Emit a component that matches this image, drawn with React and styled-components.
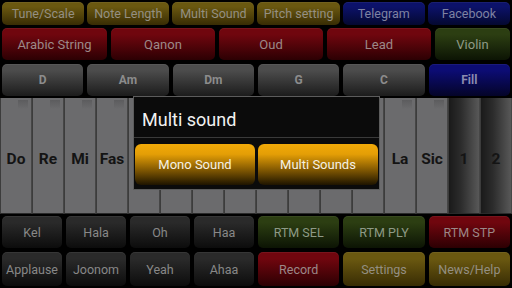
import React from "react";
import styled, { createGlobalStyle } from "styled-components";

const Global = createGlobalStyle`
  html, body { margin: 0; padding: 0; background: #000; }
  body { font-family: Roboto, "Noto Sans", Arial, sans-serif; }
`;

const Screen = styled.div`
  position: relative;
  width: 512px;
  height: 288px;
  background: #000;
  overflow: hidden;
  display: flex;
  flex-direction: column;
`;

const palette = {
  gold: ["#6a5810", "#382c04", "#948f82"],
  blue: ["#0c126a", "#040830", "#7e82a2"],
  red: ["#70060e", "#2c0003", "#9c8888"],
  green: ["#2c3e12", "#0c1404", "#8e9a86"],
  gray: ["#4c4c4c", "#1c1c1c", "#8c8c8c"],
  black: ["#2a2a2a", "#0c0c0c", "#888888"],
  fill: ["#0c0c74", "#040428", "#8a8ab0"],
};

const Row = styled.div`
  display: grid;
  grid-template-columns: ${(p) => p.$cols};
  gap: ${(p) => p.$gap || 4}px;
  height: ${(p) => p.$h}px;
  margin-top: ${(p) => p.$mt}px;
  padding: 0 2px;
`;

const Btn = styled.div`
  border-radius: 5px;
  background: linear-gradient(
    to bottom,
    ${(p) => palette[p.$c][0]} 0%,
    ${(p) => palette[p.$c][0]} 20%,
    ${(p) => palette[p.$c][1]} 100%
  );
  color: ${(p) => palette[p.$c][2]};
  display: flex;
  align-items: center;
  justify-content: center;
  font-size: ${(p) => p.$fs || 12.5}px;
  font-weight: ${(p) => (p.$bold ? 700 : 400)};
  white-space: nowrap;
  box-shadow: inset 0 1px 0 rgba(255, 255, 255, 0.06);
`;

const Keyboard = styled.div`
  margin-top: 2px;
  height: 116px;
  display: grid;
  grid-template-columns: repeat(16, 1fr);
`;

const Key = styled.div`
  position: relative;
  background: ${(p) =>
    p.$dark
      ? "linear-gradient(to right, #1a1a1a 0%, #2c2c2c 40%, #585858 100%)"
      : "#6b6b6d"};
  border-left: 1px solid #3c3c3c;
  border-right: 1px solid #464646;
  border-bottom: 1px solid #2a2a2a;
  box-sizing: border-box;
  display: flex;
  align-items: center;
  justify-content: center;
  padding-top: 7px;
  color: #141414;
  font-size: 15.5px;
  font-weight: 700;
  &::after {
    content: "";
    display: ${(p) => (p.$dark ? "none" : "block")};
    position: absolute;
    top: 2px;
    right: 3px;
    width: 10px;
    height: 9px;
    background: linear-gradient(to bottom, #5c5c5e, #6b6b6d);
  }
`;

const Dialog = styled.div`
  position: absolute;
  left: 133px;
  top: 96px;
  width: 247px;
  height: 94px;
  box-sizing: border-box;
  background: #0b0b0b;
  border: 1px solid #5c5c5c;
  display: flex;
  flex-direction: column;
`;

const Title = styled.div`
  height: 41px;
  box-sizing: border-box;
  border-bottom: 1px solid #3a3a3a;
  display: flex;
  align-items: center;
  padding-left: 8px;
  padding-top: 5px;
  color: #f2f2f2;
  font-size: 18px;
`;

const Choices = styled.div`
  display: grid;
  grid-template-columns: 1fr 1fr;
  gap: 3px;
  padding: 6px 1px 0 1px;
`;

const Choice = styled.div`
  height: 41px;
  border-radius: 6px;
  background: linear-gradient(
    to bottom,
    #f2aa08 0%,
    #e49e06 25%,
    #8a5e02 60%,
    #1e1400 100%
  );
  color: #f6f1e4;
  font-size: 13px;
  display: flex;
  align-items: center;
  justify-content: center;
`;

const row1 = [
  ["Tune/Scale", "gold"],
  ["Note Length", "gold"],
  ["Multi Sound", "gold"],
  ["Pitch setting", "gold"],
  ["Telegram", "blue"],
  ["Facebook", "blue"],
];
const row2 = [
  ["Arabic String", "red"],
  ["Qanon", "red"],
  ["Oud", "red"],
  ["Lead", "red"],
  ["Violin", "green"],
];
const row3 = [
  ["D", "gray"],
  ["Am", "gray"],
  ["Dm", "gray"],
  ["G", "gray"],
  ["C", "gray"],
  ["Fill", "fill"],
];
const row4 = [
  ["Kel", "black"],
  ["Hala", "black"],
  ["Oh", "black"],
  ["Haa", "black"],
  ["RTM SEL", "green"],
  ["RTM PLY", "green"],
  ["RTM STP", "red"],
];
const row5 = [
  ["Applause", "black"],
  ["Joonom", "black"],
  ["Yeah", "black"],
  ["Ahaa", "black"],
  ["Record", "red"],
  ["Settings", "gold"],
  ["News/Help", "gold"],
];
const keys = [
  "Do", "Re", "Mi", "Fas", "", "", "", "", "", "", "", "", "La", "Sic", "1", "2",
];

export default function App() {
  return (
    <Screen>
      <Global />
      <Row $cols="repeat(6, 1fr)" $gap={3} $h={23} $mt={2}>
        {row1.map(([t, c]) => (
          <Btn key={t} $c={c} $fs={12.5}>{t}</Btn>
        ))}
      </Row>
      <Row $cols="105px 104px 104px 104px 1fr" $h={32} $mt={3}>
        {row2.map(([t, c]) => (
          <Btn key={t} $c={c} $fs={13}>{t}</Btn>
        ))}
      </Row>
      <Row $cols="repeat(6, 1fr)" $h={32} $mt={4}>
        {row3.map(([t, c]) => (
          <Btn key={t} $c={c} $bold $fs={12}>{t}</Btn>
        ))}
      </Row>
      <Keyboard>
        {keys.map((k, i) => (
          <Key key={i} $dark={i >= 14}>{k}</Key>
        ))}
      </Keyboard>
      <Row $cols="repeat(4, 60px) repeat(3, 1fr)" $h={32} $mt={2}>
        {row4.map(([t, c]) => (
          <Btn key={t} $c={c}>{t}</Btn>
        ))}
      </Row>
      <Row $cols="repeat(4, 60px) repeat(3, 1fr)" $h={34} $mt={4}>
        {row5.map(([t, c]) => (
          <Btn key={t} $c={c}>{t}</Btn>
        ))}
      </Row>
      <Dialog>
        <Title>Multi sound</Title>
        <Choices>
          <Choice>Mono Sound</Choice>
          <Choice>Multi Sounds</Choice>
        </Choices>
      </Dialog>
    </Screen>
  );
}
